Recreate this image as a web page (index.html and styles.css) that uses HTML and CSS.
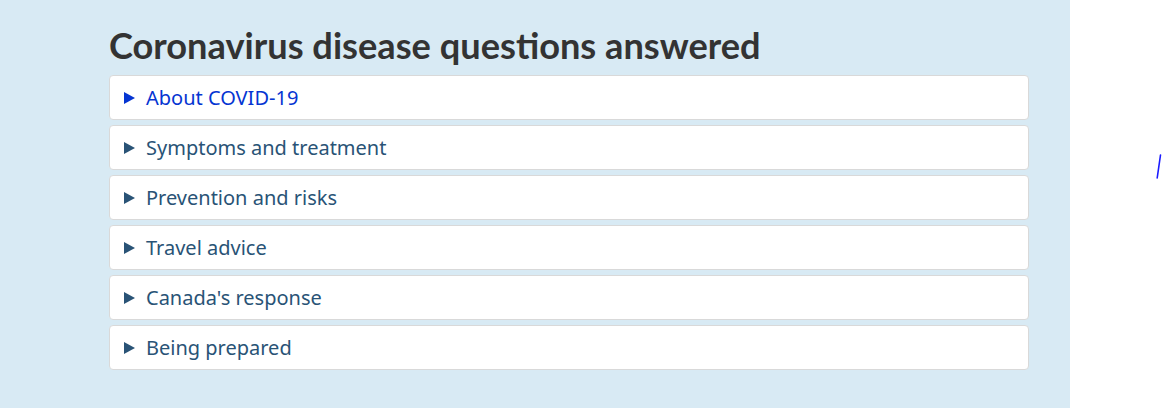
FILE: index.html
```html
<!DOCTYPE html>
<html lang="en">
<head>
  <meta charset="UTF-8">
  <title>Coronavirus disease questions answered</title>
  <link rel="stylesheet" href="styles.css">
</head>
<body>

  <div class="page">
    <section class="faq">
      <h2>Coronavirus disease questions answered</h2>

      <div class="item active"><svg class="arrow" viewBox="0 0 11 12"><path d="M0 0 L11 6 L0 12 Z"/></svg>About COVID-19</div>
      <div class="item"><svg class="arrow" viewBox="0 0 11 12"><path d="M0 0 L11 6 L0 12 Z"/></svg>Symptoms and treatment</div>
      <div class="item"><svg class="arrow" viewBox="0 0 11 12"><path d="M0 0 L11 6 L0 12 Z"/></svg>Prevention and risks</div>
      <div class="item"><svg class="arrow" viewBox="0 0 11 12"><path d="M0 0 L11 6 L0 12 Z"/></svg>Travel advice</div>
      <div class="item"><svg class="arrow" viewBox="0 0 11 12"><path d="M0 0 L11 6 L0 12 Z"/></svg>Canada's response</div>
      <div class="item"><svg class="arrow" viewBox="0 0 11 12"><path d="M0 0 L11 6 L0 12 Z"/></svg>Being prepared</div>
    </section>

    <aside class="side">
      <svg width="6" height="26" viewBox="0 0 6 26"><path d="M4.5 1 L1.2 24" stroke="#1a1aff" stroke-width="1.6" fill="none" stroke-linecap="round"/></svg>
    </aside>
  </div>

</body>
</html>
```

FILE: styles.css
```css
html, body { margin: 0; height: 100%; }
body { font-family: "Noto Sans", sans-serif; background: #fff; }
.page { display: flex; height: 408px; }
.faq { width: 920px; padding: 0 41px 0 109px; background: #d8eaf4; }
.faq h2 { font-family: Lato, sans-serif; font-weight: 700; font-size: 36.2px; line-height: 1; color: #333; margin: 0; padding: 27px 0 12px; }
.item { display: flex; align-items: center; height: 43px; margin-bottom: 5px; padding: 0 15px 0 14px; background: #fff; border: 1px solid #d9d9d9; border-radius: 4px; font-size: 20px; color: #295376; }
.arrow { flex-shrink: 0; width: 11px; height: 12px; margin-right: 11px; fill: #295376; }
.item.active { color: #0535d2; }
.item.active .arrow { fill: #0535d2; }
.side { flex: 1; padding: 154px 0 0 86px; }
.side svg { display: block; }
```
